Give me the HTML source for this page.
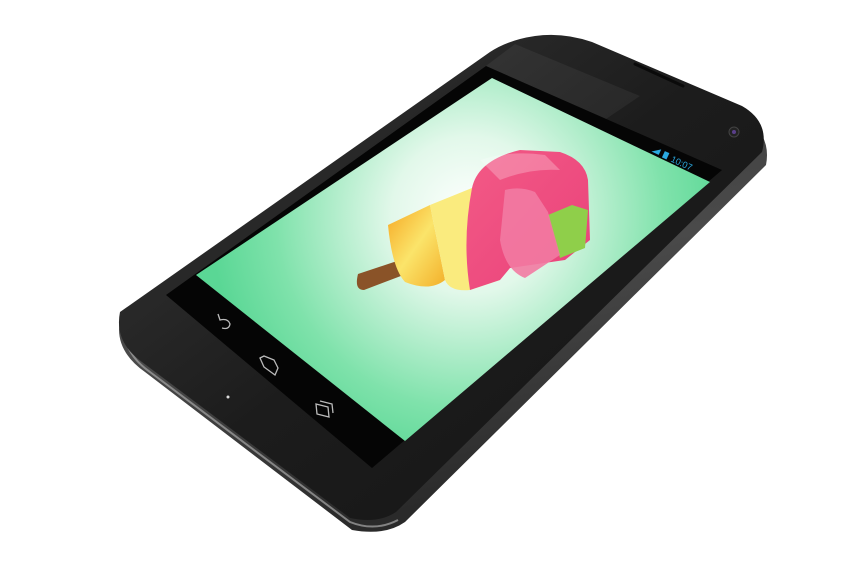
<!DOCTYPE html>
<html><head><style>html,body{margin:0;padding:0;background:#fff;width:846px;height:579px;overflow:hidden}</style></head>
<body>
<svg width="846" height="579" viewBox="0 0 846 579" xmlns="http://www.w3.org/2000/svg">
<defs>
<linearGradient id="rim" x1="0" y1="0" x2="0.3" y2="1">
<stop offset="0" stop-color="#333"/><stop offset="0.6" stop-color="#4a4a4a"/><stop offset="1" stop-color="#2a2a2a"/></linearGradient>
<linearGradient id="body" x1="0" y1="0" x2="1" y2="1">
<stop offset="0" stop-color="#3a3a3a"/><stop offset="0.5" stop-color="#1c1c1c"/><stop offset="1" stop-color="#141414"/></linearGradient>
<radialGradient id="scr" cx="470" cy="215" r="260" gradientUnits="userSpaceOnUse">
<stop offset="0" stop-color="#ffffff"/><stop offset="0.3" stop-color="#e2f8ea"/><stop offset="0.75" stop-color="#7fe2ab"/><stop offset="1" stop-color="#5ad795"/></radialGradient>
<linearGradient id="pink" x1="0" y1="0" x2="1" y2="1"><stop offset="0" stop-color="#f35a86"/><stop offset="1" stop-color="#e9417a"/></linearGradient>
<linearGradient id="yel" x1="0" y1="0" x2="1" y2="1"><stop offset="0" stop-color="#f6a722"/><stop offset="0.5" stop-color="#fbe46a"/><stop offset="1" stop-color="#f3b02a"/></linearGradient>
</defs>
<path d="M535 42 Q565 38 595 50 L742 116 Q772 134 766 165 L405 522 Q385 536 352 530 L145 372 Q114 350 120 320 L490 60 Q510 46 535 42Z" fill="url(#rim)"/>
<path d="M126 340 Q130 358 150 372 L350 522 Q375 532 398 520" fill="none" stroke="#9a9a9a" stroke-width="2" opacity="0.8"/>
<path d="M535 36 Q563 32 592 42 L742 106 Q770 122 762 152 L396 512 Q378 524 350 518 L142 362 Q114 342 120 312 L490 52 Q508 40 535 36Z" fill="url(#body)"/>
<path d="M515 44 L640 96 L560 150 L462 84Z" fill="#fff" opacity="0.05"/>
<path d="M635 64 L683 86" stroke="#0a0a0a" stroke-width="3" stroke-linecap="round"/>
<circle cx="734" cy="132" r="5" fill="#222" stroke="#444"/><circle cx="734" cy="132" r="2" fill="#5a3f8a"/>
<path d="M486 66 L722 170 L372 468 L166 295Z" fill="#050505"/>
<path d="M492 78 L710 182 L405 441 L196 275Z" fill="url(#scr)"/>
<g transform="translate(654,146) rotate(25)" fill="#2aa9e0">
<path d="M0 6 L8 0 L8 6Z"/><rect x="12" y="0" width="5" height="7"/>
<text x="21" y="7" font-family="Liberation Sans, sans-serif" font-size="9" fill="#2aa9e0">10:07</text></g>
<g stroke="#bbb" stroke-width="1.3" fill="none">
<path d="M218 314 L220 320 Q228 318 230 324 Q229 330 222 328"/>
<path d="M260 358 L264 356 L274 360 L278 368 L275 375 L264 367Z"/>
<path d="M316 404 L328 407 L329 417 L317 414Z"/><path d="M320 401 L332 404 L333 413"/>
</g>
<circle cx="228" cy="397" r="1.5" fill="#ddd"/>
<path d="M358 274 L418 254 Q426 258 422 268 L364 290 Q354 290 358 274Z" fill="#8a5328"/>
<path d="M388 225 L430 205 L445 280 Q430 292 405 282 Q392 268 388 225Z" fill="url(#yel)"/>
<path d="M430 205 L472 188 L505 225 L500 280 L470 290 Q450 292 445 280Z" fill="#faeb7e"/>
<path d="M472 188 Q478 160 520 150 L560 152 Q585 160 588 180 L590 240 L565 260 L510 268 L500 280 L470 290 Q462 240 472 188Z" fill="url(#pink)"/>
<path d="M548 215 L572 205 L588 210 L585 248 L560 258Z" fill="#8fcf4a"/>
<path d="M505 190 Q520 186 535 192 L548 212 L560 255 L525 278 Q505 270 500 240Z" fill="#f27aa2" opacity="0.9"/>
<path d="M480 160 Q510 150 545 155 L560 170 Q530 168 500 180Z" fill="#fff" opacity="0.25"/>
</svg>
</body></html>
